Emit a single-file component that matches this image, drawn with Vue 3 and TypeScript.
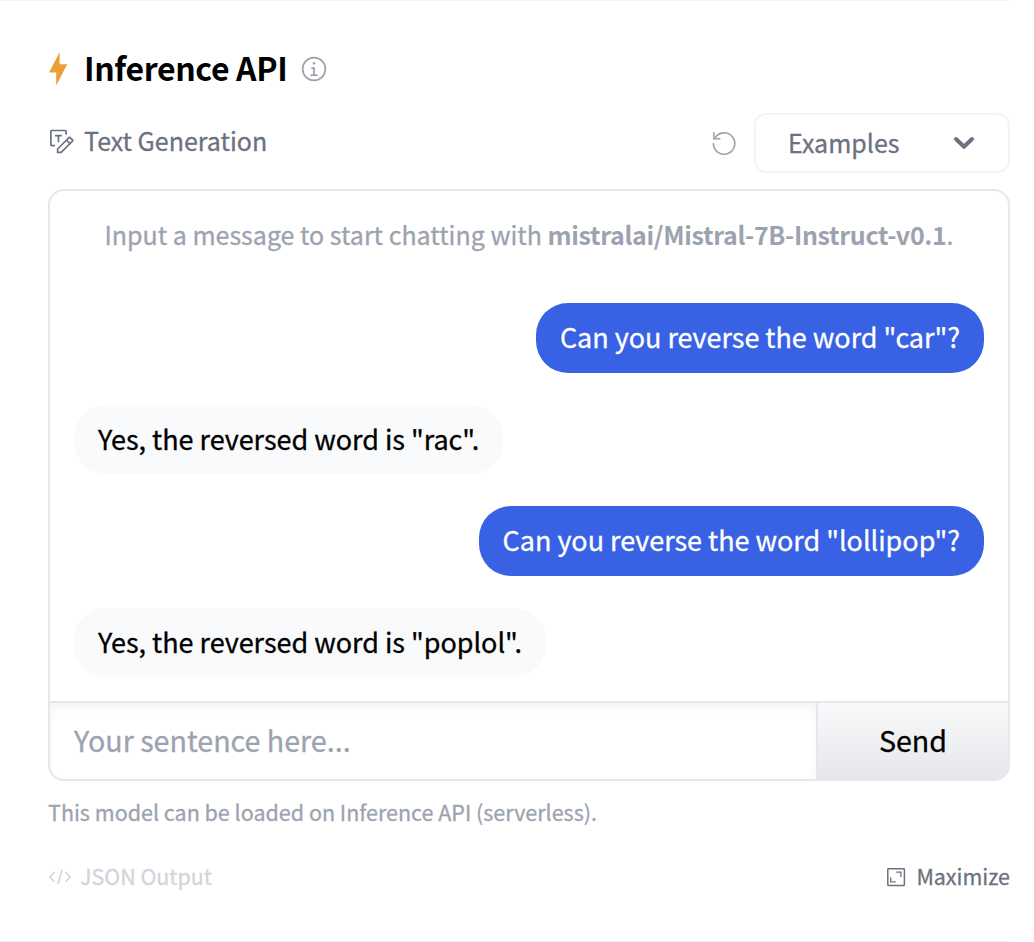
<script setup lang="ts">
interface Message {
  from: 'user' | 'model'
  text: string
}

const modelId = 'mistralai/Mistral-7B-Instruct-v0.1'
const messages: Message[] = [
  { from: 'user', text: 'Can you reverse the word "car"?' },
  { from: 'model', text: 'Yes, the reversed word is "rac".' },
  { from: 'user', text: 'Can you reverse the word "lollipop"?' },
  { from: 'model', text: 'Yes, the reversed word is "poplol".' },
]
</script>

<template>
  <main class="widget">
    <header class="heading">
      <svg class="bolt" width="20" height="34" viewBox="0 0 20 34">
        <path d="M11.6 0.2 L1 20.6 H8.2 V33.6 L19.2 12.2 H11.6 Z" fill="#eb9f38" />
      </svg>
      <h1>Inference API</h1>
      <svg class="info" width="28" height="28" viewBox="0 0 32 32" fill="#9ca3af">
        <path d="M17 22v-8h-4v2h2v6h-3v2h8v-2zM16 8a1.5 1.5 0 1 0 1.5 1.5A1.5 1.5 0 0 0 16 8z" />
        <path d="M16 30a14 14 0 1 1 14-14a14 14 0 0 1-14 14zm0-26a12 12 0 1 0 12 12A12 12 0 0 0 16 4z" />
      </svg>
    </header>

    <div class="toolbar">
      <div class="task">
        <svg width="28" height="28" viewBox="0 0 18 18" fill="#6b7280">
          <path d="M16.2607 8.08202L14.468 6.28928C14.3063 6.12804 14.0873 6.03749 13.859 6.03749C13.6307 6.03749 13.4117 6.12804 13.25 6.28928L5.6375 13.904V16.9125H8.64607L16.2607 9.30002C16.422 9.13836 16.5125 8.91935 16.5125 8.69102C16.5125 8.4627 16.422 8.24369 16.2607 8.08202V8.08202ZM8.1953 15.825H6.725V14.3547L11.858 9.22118L13.3288 10.6915L8.1953 15.825ZM14.0982 9.92262L12.6279 8.45232L13.8606 7.21964L15.3309 8.68994L14.0982 9.92262Z" />
          <path d="M6.18125 9.84373H7.26875V6.03748H8.9V4.94998H4.55V6.03748H6.18125V9.84373Z" />
          <path d="M4.55 11.475H2.375V2.775H11.075V4.95H12.1625V2.775C12.1625 2.48658 12.0479 2.20997 11.844 2.00602C11.64 1.80208 11.3634 1.6875 11.075 1.6875H2.375C2.08658 1.6875 1.80997 1.80208 1.60602 2.00602C1.40207 2.20997 1.2875 2.48658 1.2875 2.775V11.475C1.2875 11.7634 1.40207 12.04 1.60602 12.244C1.80997 12.4479 2.08658 12.5625 2.375 12.5625H4.55V11.475Z" />
        </svg>
        <span>Text Generation</span>
      </div>
      <svg class="reset" width="26" height="26" viewBox="0 0 26 26" fill="none" stroke="#9ca3af" stroke-width="1.6">
        <path d="M2.8 2.2v6.6h6.6" />
        <path d="M3.8 8.2A10.7 10.7 0 1 1 2.4 13" />
      </svg>
      <button class="examples">
        <span>Examples</span>
        <svg width="22" height="14" viewBox="0 0 22 14" fill="none" stroke="#6b7280" stroke-width="4" stroke-linecap="round" stroke-linejoin="round">
          <path d="M3 3 L11 10.8 L19 3" />
        </svg>
      </button>
    </div>

    <section class="chat">
      <div class="log">
        <p class="hint">Input a message to start chatting with <strong>{{ modelId }}</strong>.</p>
        <div v-for="(m, i) in messages" :key="i" class="bubble" :class="m.from">{{ m.text }}</div>
      </div>
      <form class="composer" @submit.prevent>
        <div class="field">Your sentence here...</div>
        <button class="send">Send</button>
      </form>
    </section>

    <p class="note">This model can be loaded on Inference API (serverless).</p>

    <footer class="actions">
      <div class="json">
        <svg width="24" height="24" viewBox="0 0 32 32" fill="#d1d5db">
          <path d="M31 16l-7 7l-1.41-1.41L28.17 16l-5.58-5.59L24 9l7 7z" />
          <path d="M1 16l7-7l1.41 1.41L3.83 16l5.58 5.59L8 23l-7-7z" />
          <path d="M12.419 25.484L17.639 6l1.932.518L14.35 26z" />
        </svg>
        <span>JSON Output</span>
      </div>
      <div class="max">
        <svg width="20" height="20" viewBox="0 0 20 20" fill="none" stroke="#6b7280">
          <rect x="1.8" y="1.8" width="16.6" height="16.6" rx="0.6" stroke-width="1.5" />
          <path d="M10.2 5.2h4.7v4.8M4.7 10.4v4.5h5" stroke-width="1.3" />
        </svg>
        <span>Maximize</span>
      </div>
    </footer>
  </main>
</template>

<style>
body {
  background: #fff;
}
</style>

<style scoped>
* {
  box-sizing: border-box;
  margin: 0;
}
.widget {
  width: 1010px;
  height: 942px;
  padding: 45px 0 0 48px;
  border-top: 1px solid #f3f4f6;
  border-bottom: 1px solid #f3f4f6;
  font-family: "Noto Sans CJK SC", "Noto Sans", sans-serif;
  color: #000;
  line-height: 1;
  overflow: hidden;
  -webkit-text-stroke-width: 0.3px;
}
.heading {
  display: flex;
  align-items: center;
  height: 46px;
}
.bolt {
  margin-right: 16px;
}
h1 {
  padding-bottom: 4px;
  font-size: 32px;
  font-weight: 600;
  letter-spacing: -0.36px;
  -webkit-text-stroke-width: 0;
}
.info {
  margin-left: 13px;
}
.toolbar {
  display: flex;
  align-items: center;
  height: 60px;
  margin-top: 21px;
  font-size: 25px;
  color: #6b7280;
}
.task {
  display: flex;
  align-items: center;
  gap: 8px;
  padding-bottom: 4px;
}
.task span {
  padding-bottom: 2px;
}
.reset {
  margin: 0 17px 0 auto;
}
.examples {
  display: flex;
  align-items: center;
  justify-content: space-between;
  width: 256px;
  height: 60px;
  padding: 0 33px 0 32px;
  border: 2px solid #f3f4f6;
  border-radius: 12px;
  background: #fff;
  font: inherit;
  color: inherit;
}
.examples span {
  padding-bottom: 2px;
}
.chat {
  height: 592px;
  margin-top: 16px;
  border: 2px solid #e5e7eb;
  border-radius: 16px;
  overflow: hidden;
}
.log {
  display: flex;
  flex-direction: column;
  height: 510px;
  padding: 24px 24px 0;
}
.hint {
  flex: none;
  height: 44px;
  margin-bottom: 44px;
  line-height: 38px;
  text-align: center;
  white-space: nowrap;
  font-size: 25px;
  color: #9ca3af;
}
.hint strong {
  letter-spacing: -0.32px;
  -webkit-text-stroke-width: 0;
}
.bubble {
  flex: none;
  height: 69.5px;
  margin-bottom: 32px;
  padding: 0 24px;
  border-radius: 32px;
  font-size: 27px;
  letter-spacing: -0.03px;
  line-height: 68px;
}
.user {
  align-self: flex-end;
  background: #3862e3;
  color: #fff;
}
.model {
  align-self: flex-start;
  height: 69px;
  margin-bottom: 32.5px;
  background: #f9fafb;
}
.composer {
  display: flex;
  height: 78px;
  border-top: 2px solid #e5e7eb;
  font-size: 28.65px;
}
.field {
  flex: 1;
  padding-left: 24px;
  line-height: 74px;
  color: #9ca3af;
  box-shadow: inset 0 4px 8px rgba(0, 0, 0, 0.05);
}
.send {
  width: 192px;
  padding: 0 0 2px;
  border: 0;
  border-left: 2px solid #e5e7eb;
  background: linear-gradient(#f9fafb, #e5e7eb);
  font: inherit;
  font-size: 28.6px;
}
.note {
  margin-top: 15px;
  font-size: 21.5px;
  line-height: 32px;
  color: #9ca3af;
}
.actions {
  display: flex;
  justify-content: space-between;
  height: 32px;
  margin-top: 33px;
  font-size: 21.45px;
  line-height: 30px;
}
.actions span {
  padding-bottom: 2px;
}
.json,
.max {
  display: flex;
  align-items: center;
}
.json {
  gap: 8px;
  color: #d1d5db;
}
.max {
  gap: 10px;
  color: #6b7280;
}
</style>
